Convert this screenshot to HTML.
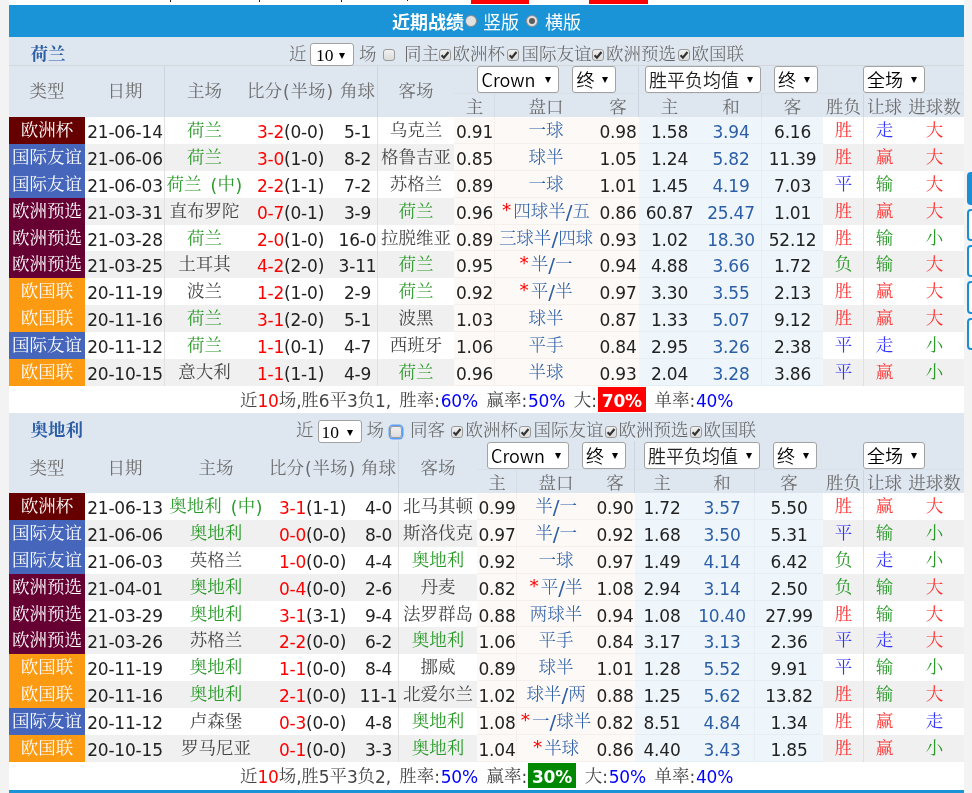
<!DOCTYPE html>
<html lang="zh-CN"><head><meta charset="utf-8"><title>近期战绩</title>
<style>
html,body{margin:0;padding:0}
body{background:#f3f3f3;width:972px;height:793px;overflow:hidden;position:relative;font-family:"DejaVu Sans","Noto Serif CJK SC",sans-serif;font-size:17.5px;font-weight:300;color:#333}
#wrap{will-change:transform;position:absolute;left:9px;top:0;width:955px;height:793px;background:#fff}
#topfrag{position:absolute;left:0;top:0;width:955px;height:5px;background:#fff}
#topfrag i{position:absolute;top:0;width:1px;height:2px;background:#222}
#topfrag b{position:absolute;top:0;height:3.5px;background:#f00}
#bar{position:absolute;left:0;top:5px;width:955px;height:32px;background:#1a94d6;color:#fff;line-height:32px;white-space:nowrap}
#bar .ttl{position:absolute;left:383px;top:0;font-family:"Noto Sans CJK SC",sans-serif;font-weight:bold;font-size:18px}
#bar .rl{font-family:"Noto Sans CJK SC",sans-serif;font-size:18px;font-weight:400;position:absolute;top:0}
#bar .rl1{left:474px}
#bar .rl2{left:536px}
#bar .rd{position:absolute;top:10px;width:12px;height:12px;border-radius:50%;background:#e2e2e2;border:1px solid #8a8a8a;box-sizing:border-box}
#bar .rd1{left:456px}
#bar .rd2{left:517px}
#bar .rd.on:after{content:"";position:absolute;left:2px;top:2px;width:6px;height:6px;border-radius:50%;background:#5c5c5c}
#main{position:absolute;left:0;top:37px;width:955px}
.trow{position:relative;height:28px;background:#dee6f0;line-height:28px;white-space:nowrap;color:#666}
.tname{position:absolute;left:21.5px;top:3px;color:#2b5ea6;font-weight:700}
.sel{font-weight:400}
.trow .ab{position:absolute;top:3px}
.sel{display:inline-block;box-sizing:border-box;height:23px;border:1px solid #a2a2a2;border-radius:3px;background:#fff;position:relative;vertical-align:middle;text-align:left;color:#000;font-family:"DejaVu Sans","Noto Sans CJK SC",sans-serif;font-size:17px;line-height:21px}
.sel .st{position:absolute;left:3.5px;top:0}
.sel .ar{position:absolute;right:7px;top:8px;width:0;height:0;border-left:3px solid transparent;border-right:3px solid transparent;border-top:6px solid #000}
.cb{position:absolute;top:12px;width:12px;height:12px;box-sizing:border-box;border:1px solid #9a9a9a;border-radius:3px;background:linear-gradient(#f0f0f0,#dcdcdc)}
.cb.foc{box-shadow:0 0 0 1.5px #5b9dfb}
.cb svg{position:absolute;left:-1px;top:-1px;width:12px;height:12px}
table.tb{border-collapse:collapse;table-layout:fixed;width:955px}
.tb th,.tb td{padding:0;text-align:center;white-space:nowrap;overflow:visible;font-weight:normal}
.tb tr.h1{height:29px;background:#dee6f0;color:#6c6c6c}
.tb tr.h2{height:23px;background:#dee6f0;color:#6c6c6c}
.tb tr.h2 th{line-height:20px;height:20px;padding-top:3px}
.tb tr.h1 th{line-height:24px}
.tb th.selc{vertical-align:top;line-height:0;font-size:0}
.selc .sel{height:27px;margin:1px 6.5px 0 6.5px;line-height:25px;vertical-align:top;font-size:18px;font-family:"Noto Sans CJK SC",sans-serif;font-weight:350}
.selc .sel .ar{top:10px;right:7px}
.trow .sel{font-size:17.5px;line-height:23px;font-family:"Liberation Serif",serif}
.trow .sel .st{left:5px}
.trow .sel .ar{top:9px;right:8px}
.trow .sel{position:absolute;top:6px}
.tb tr.h1 th,.tb tr.h2 th{background:#dee6f0}
.tb td{height:27px;line-height:27px}
.tb tr.alt td{background:#f0f0f0}
.tb td.od,.tb tr.alt td.od{background:#fdf9f6}
.tb td.eu,.tb tr.alt td.eu{background:#eef6fb}
.ty{color:#fff}
.tb td.t1,.tb tr.alt td.t1{background:#660000}
.tb td.t2,.tb tr.alt td.t2{background:#4566bb}
.tb td.t3,.tb tr.alt td.t3{background:#660033}
.tb td.t4,.tb tr.alt td.t4{background:#fc9a12}
.l{font-size:17px;font-weight:400;position:relative;top:2px;letter-spacing:-0.2px}
.dt,.sc,.cn,.od,.eu{color:#222}
.tb td.hc{font-weight:300}
.tm{color:#444}
.tm.g{color:#2a9a2a}
.red{color:#f00}
.tb td.hc{color:#2b5ea6;font-size:17.5px}
.star{color:#f00}
.dr{color:#2b5ea6}
.rs.r{color:#f33}
.rs.b{color:#33f}
.rs.g{color:#2a9a2a}
.stat td{background:#fff;height:27px;color:#444;word-spacing:3px}
.stat td .w{position:relative;top:1px}
.stat .l{top:1px}
.cl{margin-right:1px}
.blu{color:#00f}
.hot{background:#f00;color:#fff;font-weight:bold;padding:4px 4px 1px}
.cold{background:#080;color:#fff;font-weight:bold;padding:4px 4px 1px}
#bot{position:absolute;left:0;top:790px;width:955px;height:3px;background:#1a94d6}
#side{position:absolute;left:967px;top:0;width:5px;height:793px;overflow:hidden}
#side i{position:absolute;left:0;box-sizing:border-box;width:10px;height:33px;border:2px solid #1a8fd6;border-radius:4px;background:#fff}
#side i.f{background:#1a8fd6}

.tb th.vr{box-shadow:inset -1px 0 0 #cdd6e0}
.tb th.vf{box-shadow:inset -1px 0 0 #d3dce7}
.tb td.vr{box-shadow:inset -1px 0 0 #e1e1e1}
.tb td.od{box-shadow:inset 0 -1px 0 #f6f0ec}
.tb td.od.vf{box-shadow:inset -1px -1px 0 #f6f0ec}
.tb td.eu{box-shadow:inset 0 -1px 0 #e6eef4}
.tb td.eu.vf{box-shadow:inset -1px -1px 0 #e6eef4}
.tb th.selc{box-shadow:inset 0 -1px 0 #d3dce7}
.tb tr.sh td{height:26px;line-height:26px}
#s1 tr.h1 th{box-shadow:inset 0 1px 0 #d3d8dd}
#s1 tr.h1 th.vr{box-shadow:inset -1px 0 0 #cdd6e0, inset 0 1px 0 #d3d8dd}
#s1 tr.h1 th.selc{box-shadow:inset 0 1px 0 #d3d8dd, inset 0 -1px 0 #d8e0ea}
#s2 tr.h1 th.selc{box-shadow:inset 0 -1px 0 #d8e0ea}
#s1 tr.h1 th.selc.vr{box-shadow:inset 0 1px 0 #d3d8dd, inset 0 -1px 0 #d8e0ea, inset -1px 0 0 #cdd6e0}
#s2 tr.h1 th.selc.vr{box-shadow:inset 0 -1px 0 #d8e0ea, inset -1px 0 0 #cdd6e0}
.tb td.tm{word-spacing:3px}
.tb td.tm .l{margin:0 .5px}
.tb th .l{margin:0 1px;top:1px}
#s2 tr.h1 th{padding-top:2px}
#s2 tr.h1 th.selc{padding-top:0}
#s2 .selc .sc{margin-left:8.5px}
.tb td.hc .l{font-size:20px;top:1.5px;letter-spacing:0;line-height:1px}
.tb td.hc .star{font-size:18.5px;top:-1px;margin-right:.5px}
#s2t .sel{top:7px}
#s2t .sel .st{left:2.5px}
#s2t .cb{top:13px}
.tb td.hc .star{margin-right:2px}
#s1 .selc .sc{margin-left:5.5px}

</style></head><body>
<div id="wrap">
<div id="topfrag"><i style="left:161px"></i><i style="left:250px"></i><i style="left:332px"></i><i style="left:398px;height:1px"></i><b style="left:462px;width:58px"></b><b style="left:580px;width:59px"></b></div>
<div id="bar"><span class="ttl">近期战绩</span><span class="rd rd1"></span><span class="rl rl1">竖版</span><span class="rd rd2 on"></span><span class="rl rl2">横版</span></div>
<div id="main">
<div class="trow" id="s1t"><span class="tname">荷兰</span><span class="ab " style="left:280px">近</span><span class="sel s10" style="left:301px;width:44px"><span class="st">10</span><i class="ar"></i></span><span class="ab " style="left:350px">场</span><span class="cb cb0 " style="left:374px"></span><span class="ab " style="left:395px">同主</span><span class="cb ck" style="left:430px"><svg viewBox="0 0 12 12"><path d="M2.6 6.3 L4.9 8.7 L9.5 3" fill="none" stroke="#333" stroke-width="2.2"/></svg></span><span class="ab " style="left:443.5px">欧洲杯</span><span class="cb ck" style="left:498px"><svg viewBox="0 0 12 12"><path d="M2.6 6.3 L4.9 8.7 L9.5 3" fill="none" stroke="#333" stroke-width="2.2"/></svg></span><span class="ab " style="left:512.5px">国际友谊</span><span class="cb ck" style="left:583px"><svg viewBox="0 0 12 12"><path d="M2.6 6.3 L4.9 8.7 L9.5 3" fill="none" stroke="#333" stroke-width="2.2"/></svg></span><span class="ab " style="left:597px">欧洲预选</span><span class="cb ck" style="left:669px"><svg viewBox="0 0 12 12"><path d="M2.6 6.3 L4.9 8.7 L9.5 3" fill="none" stroke="#333" stroke-width="2.2"/></svg></span><span class="ab " style="left:682.5px">欧国联</span></div>
<table class="tb" id="s1"><colgroup><col style="width:76px"><col style="width:80px"><col style="width:79px"><col style="width:93px"><col style="width:41px"><col style="width:76px"><col style="width:41px"><col style="width:102px"><col style="width:42px"><col style="width:61px"><col style="width:62px"><col style="width:61px"><col style="width:41px"><col style="width:41px"><col style="width:59px"></colgroup>
<tr class="h1"><th rowspan="2">类型</th><th rowspan="2" class="vr">日期</th><th rowspan="2">主场</th><th rowspan="2">比分<span class="l">(</span>半场<span class="l">)</span></th><th rowspan="2" class="vr">角球</th><th rowspan="2">客场</th><th colspan="3" class="vr selc"><span class="sel sa" style="width:82px"><span class="st">Crown</span><i class="ar"></i></span><span class="sel sb" style="width:44px"><span class="st">终</span><i class="ar"></i></span></th><th colspan="3" class="selc"><span class="sel sc" style="width:116px"><span class="st">胜平负均值</span><i class="ar"></i></span><span class="sel sd" style="width:44px"><span class="st">终</span><i class="ar"></i></span></th><th colspan="3" class="selc"><span class="sel se" style="width:62px"><span class="st">全场</span><i class="ar"></i></span></th></tr>
<tr class="h2"><th class="vf">主</th><th>盘口</th><th class="vr">客</th><th>主</th><th class="vf">和</th><th>客</th><th class="vr">胜负</th><th>让球</th><th>进球数</th></tr>
<tr class=""><td class="ty t1">欧洲杯</td><td class="dt vr"><span class="l">21-06-14</span></td><td class="tm g">荷兰</td><td class="sc"><span class="l"><span class="red">3-2</span>(0-0)</span></td><td class="cn vr"><span class="l">5-1</span></td><td class="tm ">乌克兰</td><td class="od vf"><span class="l">0.91</span></td><td class="od hc">一球</td><td class="od"><span class="l">0.98</span></td><td class="eu"><span class="l">1.58</span></td><td class="eu dr vf"><span class="l">3.94</span></td><td class="eu"><span class="l">6.16</span></td><td class="rs vr r">胜</td><td class="rs b">走</td><td class="rs r">大</td></tr>
<tr class="alt"><td class="ty t2">国际友谊</td><td class="dt vr"><span class="l">21-06-06</span></td><td class="tm g">荷兰</td><td class="sc"><span class="l"><span class="red">3-0</span>(1-0)</span></td><td class="cn vr"><span class="l">8-2</span></td><td class="tm ">格鲁吉亚</td><td class="od vf"><span class="l">0.85</span></td><td class="od hc">球半</td><td class="od"><span class="l">1.05</span></td><td class="eu"><span class="l">1.24</span></td><td class="eu dr vf"><span class="l">5.82</span></td><td class="eu"><span class="l">11.39</span></td><td class="rs vr r">胜</td><td class="rs r">赢</td><td class="rs r">大</td></tr>
<tr class=""><td class="ty t2">国际友谊</td><td class="dt vr"><span class="l">21-06-03</span></td><td class="tm g">荷兰 <span class="l">(</span>中<span class="l">)</span></td><td class="sc"><span class="l"><span class="red">2-2</span>(1-1)</span></td><td class="cn vr"><span class="l">7-2</span></td><td class="tm ">苏格兰</td><td class="od vf"><span class="l">0.89</span></td><td class="od hc">一球</td><td class="od"><span class="l">1.01</span></td><td class="eu"><span class="l">1.45</span></td><td class="eu dr vf"><span class="l">4.19</span></td><td class="eu"><span class="l">7.03</span></td><td class="rs vr b">平</td><td class="rs g">输</td><td class="rs r">大</td></tr>
<tr class="alt"><td class="ty t3">欧洲预选</td><td class="dt vr"><span class="l">21-03-31</span></td><td class="tm ">直布罗陀</td><td class="sc"><span class="l"><span class="red">0-7</span>(0-1)</span></td><td class="cn vr"><span class="l">3-9</span></td><td class="tm g">荷兰</td><td class="od vf"><span class="l">0.96</span></td><td class="od hc"><span class="l star">*</span>四球半<span class="l">/</span>五</td><td class="od"><span class="l">0.86</span></td><td class="eu"><span class="l">60.87</span></td><td class="eu dr vf"><span class="l">25.47</span></td><td class="eu"><span class="l">1.01</span></td><td class="rs vr r">胜</td><td class="rs r">赢</td><td class="rs r">大</td></tr>
<tr class=" sh"><td class="ty t3">欧洲预选</td><td class="dt vr"><span class="l">21-03-28</span></td><td class="tm g">荷兰</td><td class="sc"><span class="l"><span class="red">2-0</span>(1-0)</span></td><td class="cn vr"><span class="l">16-0</span></td><td class="tm ">拉脱维亚</td><td class="od vf"><span class="l">0.89</span></td><td class="od hc">三球半<span class="l">/</span>四球</td><td class="od"><span class="l">0.93</span></td><td class="eu"><span class="l">1.02</span></td><td class="eu dr vf"><span class="l">18.30</span></td><td class="eu"><span class="l">52.12</span></td><td class="rs vr r">胜</td><td class="rs g">输</td><td class="rs g">小</td></tr>
<tr class="alt"><td class="ty t3">欧洲预选</td><td class="dt vr"><span class="l">21-03-25</span></td><td class="tm ">土耳其</td><td class="sc"><span class="l"><span class="red">4-2</span>(2-0)</span></td><td class="cn vr"><span class="l">3-11</span></td><td class="tm g">荷兰</td><td class="od vf"><span class="l">0.95</span></td><td class="od hc"><span class="l star">*</span>半<span class="l">/</span>一</td><td class="od"><span class="l">0.94</span></td><td class="eu"><span class="l">4.88</span></td><td class="eu dr vf"><span class="l">3.66</span></td><td class="eu"><span class="l">1.72</span></td><td class="rs vr g">负</td><td class="rs g">输</td><td class="rs r">大</td></tr>
<tr class=""><td class="ty t4">欧国联</td><td class="dt vr"><span class="l">20-11-19</span></td><td class="tm ">波兰</td><td class="sc"><span class="l"><span class="red">1-2</span>(1-0)</span></td><td class="cn vr"><span class="l">2-9</span></td><td class="tm g">荷兰</td><td class="od vf"><span class="l">0.92</span></td><td class="od hc"><span class="l star">*</span>平<span class="l">/</span>半</td><td class="od"><span class="l">0.97</span></td><td class="eu"><span class="l">3.30</span></td><td class="eu dr vf"><span class="l">3.55</span></td><td class="eu"><span class="l">2.13</span></td><td class="rs vr r">胜</td><td class="rs r">赢</td><td class="rs r">大</td></tr>
<tr class="alt"><td class="ty t4">欧国联</td><td class="dt vr"><span class="l">20-11-16</span></td><td class="tm g">荷兰</td><td class="sc"><span class="l"><span class="red">3-1</span>(2-0)</span></td><td class="cn vr"><span class="l">5-1</span></td><td class="tm ">波黑</td><td class="od vf"><span class="l">1.03</span></td><td class="od hc">球半</td><td class="od"><span class="l">0.87</span></td><td class="eu"><span class="l">1.33</span></td><td class="eu dr vf"><span class="l">5.07</span></td><td class="eu"><span class="l">9.12</span></td><td class="rs vr r">胜</td><td class="rs r">赢</td><td class="rs r">大</td></tr>
<tr class=""><td class="ty t2">国际友谊</td><td class="dt vr"><span class="l">20-11-12</span></td><td class="tm g">荷兰</td><td class="sc"><span class="l"><span class="red">1-1</span>(0-1)</span></td><td class="cn vr"><span class="l">4-7</span></td><td class="tm ">西班牙</td><td class="od vf"><span class="l">1.06</span></td><td class="od hc">平手</td><td class="od"><span class="l">0.84</span></td><td class="eu"><span class="l">2.95</span></td><td class="eu dr vf"><span class="l">3.26</span></td><td class="eu"><span class="l">2.38</span></td><td class="rs vr b">平</td><td class="rs b">走</td><td class="rs g">小</td></tr>
<tr class="alt"><td class="ty t4">欧国联</td><td class="dt vr"><span class="l">20-10-15</span></td><td class="tm ">意大利</td><td class="sc"><span class="l"><span class="red">1-1</span>(1-1)</span></td><td class="cn vr"><span class="l">4-9</span></td><td class="tm g">荷兰</td><td class="od vf"><span class="l">0.96</span></td><td class="od hc">半球</td><td class="od"><span class="l">0.93</span></td><td class="eu"><span class="l">2.04</span></td><td class="eu dr vf"><span class="l">3.28</span></td><td class="eu"><span class="l">3.86</span></td><td class="rs vr b">平</td><td class="rs r">赢</td><td class="rs g">小</td></tr>
<tr class="stat"><td colspan="15"><span class="w">近<span class="l red">10</span>场<span class="l">,</span>胜<span class="l">6</span>平<span class="l">3</span>负<span class="l">1, </span>胜率<span class="l cl">:</span><span class="l blu">60%</span> 赢率<span class="l cl">:</span><span class="l blu">50%</span> 大<span class="l cl">:</span><span class="l hot">70%</span> 单率<span class="l cl">:</span><span class="l blu">40%</span></span></td></tr>
</table>
<div class="trow" id="s2t"><span class="tname">奥地利</span><span class="ab " style="left:287px">近</span><span class="sel s10" style="left:309px;width:44px"><span class="st">10</span><i class="ar"></i></span><span class="ab " style="left:357.5px">场</span><span class="cb cb0 foc" style="left:381px"></span><span class="ab " style="left:401px">同客</span><span class="cb ck" style="left:442px"><svg viewBox="0 0 12 12"><path d="M2.6 6.3 L4.9 8.7 L9.5 3" fill="none" stroke="#333" stroke-width="2.2"/></svg></span><span class="ab " style="left:456.5px">欧洲杯</span><span class="cb ck" style="left:510px"><svg viewBox="0 0 12 12"><path d="M2.6 6.3 L4.9 8.7 L9.5 3" fill="none" stroke="#333" stroke-width="2.2"/></svg></span><span class="ab " style="left:524.5px">国际友谊</span><span class="cb ck" style="left:595.5px"><svg viewBox="0 0 12 12"><path d="M2.6 6.3 L4.9 8.7 L9.5 3" fill="none" stroke="#333" stroke-width="2.2"/></svg></span><span class="ab " style="left:609.5px">欧洲预选</span><span class="cb ck" style="left:681px"><svg viewBox="0 0 12 12"><path d="M2.6 6.3 L4.9 8.7 L9.5 3" fill="none" stroke="#333" stroke-width="2.2"/></svg></span><span class="ab " style="left:694.5px">欧国联</span></div>
<table class="tb" id="s2"><colgroup><col style="width:76px"><col style="width:80px"><col style="width:102px"><col style="width:91px"><col style="width:41px"><col style="width:78px"><col style="width:40px"><col style="width:78px"><col style="width:40px"><col style="width:54px"><col style="width:66px"><col style="width:68px"><col style="width:41px"><col style="width:41px"><col style="width:59px"></colgroup>
<tr class="h1"><th rowspan="2">类型</th><th rowspan="2" class="">日期</th><th rowspan="2">主场</th><th rowspan="2">比分<span class="l">(</span>半场<span class="l">)</span></th><th rowspan="2" class="vr">角球</th><th rowspan="2">客场</th><th colspan="3" class="vr selc"><span class="sel sa" style="width:82px"><span class="st">Crown</span><i class="ar"></i></span><span class="sel sb" style="width:44px"><span class="st">终</span><i class="ar"></i></span></th><th colspan="3" class="selc"><span class="sel sc" style="width:116px"><span class="st">胜平负均值</span><i class="ar"></i></span><span class="sel sd" style="width:44px"><span class="st">终</span><i class="ar"></i></span></th><th colspan="3" class="selc"><span class="sel se" style="width:62px"><span class="st">全场</span><i class="ar"></i></span></th></tr>
<tr class="h2"><th class="vf">主</th><th>盘口</th><th class="vr">客</th><th>主</th><th class="vf">和</th><th>客</th><th class="vr">胜负</th><th>让球</th><th>进球数</th></tr>
<tr class=""><td class="ty t1">欧洲杯</td><td class="dt "><span class="l">21-06-13</span></td><td class="tm g">奥地利 <span class="l">(</span>中<span class="l">)</span></td><td class="sc"><span class="l"><span class="red">3-1</span>(1-1)</span></td><td class="cn vr"><span class="l">4-0</span></td><td class="tm ">北马其顿</td><td class="od vf"><span class="l">0.99</span></td><td class="od hc">半<span class="l">/</span>一</td><td class="od"><span class="l">0.90</span></td><td class="eu"><span class="l">1.72</span></td><td class="eu dr vf"><span class="l">3.57</span></td><td class="eu"><span class="l">5.50</span></td><td class="rs vr r">胜</td><td class="rs r">赢</td><td class="rs r">大</td></tr>
<tr class="alt"><td class="ty t2">国际友谊</td><td class="dt "><span class="l">21-06-06</span></td><td class="tm g">奥地利</td><td class="sc"><span class="l"><span class="red">0-0</span>(0-0)</span></td><td class="cn vr"><span class="l">8-0</span></td><td class="tm ">斯洛伐克</td><td class="od vf"><span class="l">0.97</span></td><td class="od hc">半<span class="l">/</span>一</td><td class="od"><span class="l">0.92</span></td><td class="eu"><span class="l">1.68</span></td><td class="eu dr vf"><span class="l">3.50</span></td><td class="eu"><span class="l">5.31</span></td><td class="rs vr b">平</td><td class="rs g">输</td><td class="rs g">小</td></tr>
<tr class=""><td class="ty t2">国际友谊</td><td class="dt "><span class="l">21-06-03</span></td><td class="tm ">英格兰</td><td class="sc"><span class="l"><span class="red">1-0</span>(0-0)</span></td><td class="cn vr"><span class="l">4-4</span></td><td class="tm g">奥地利</td><td class="od vf"><span class="l">0.92</span></td><td class="od hc">一球</td><td class="od"><span class="l">0.97</span></td><td class="eu"><span class="l">1.49</span></td><td class="eu dr vf"><span class="l">4.14</span></td><td class="eu"><span class="l">6.42</span></td><td class="rs vr g">负</td><td class="rs b">走</td><td class="rs g">小</td></tr>
<tr class="alt"><td class="ty t3">欧洲预选</td><td class="dt "><span class="l">21-04-01</span></td><td class="tm g">奥地利</td><td class="sc"><span class="l"><span class="red">0-4</span>(0-0)</span></td><td class="cn vr"><span class="l">2-6</span></td><td class="tm ">丹麦</td><td class="od vf"><span class="l">0.82</span></td><td class="od hc"><span class="l star">*</span>平<span class="l">/</span>半</td><td class="od"><span class="l">1.08</span></td><td class="eu"><span class="l">2.94</span></td><td class="eu dr vf"><span class="l">3.14</span></td><td class="eu"><span class="l">2.50</span></td><td class="rs vr g">负</td><td class="rs g">输</td><td class="rs r">大</td></tr>
<tr class=" sh"><td class="ty t3">欧洲预选</td><td class="dt "><span class="l">21-03-29</span></td><td class="tm g">奥地利</td><td class="sc"><span class="l"><span class="red">3-1</span>(3-1)</span></td><td class="cn vr"><span class="l">9-4</span></td><td class="tm ">法罗群岛</td><td class="od vf"><span class="l">0.88</span></td><td class="od hc">两球半</td><td class="od"><span class="l">0.94</span></td><td class="eu"><span class="l">1.08</span></td><td class="eu dr vf"><span class="l">10.40</span></td><td class="eu"><span class="l">27.99</span></td><td class="rs vr r">胜</td><td class="rs g">输</td><td class="rs r">大</td></tr>
<tr class="alt"><td class="ty t3">欧洲预选</td><td class="dt "><span class="l">21-03-26</span></td><td class="tm ">苏格兰</td><td class="sc"><span class="l"><span class="red">2-2</span>(0-0)</span></td><td class="cn vr"><span class="l">6-2</span></td><td class="tm g">奥地利</td><td class="od vf"><span class="l">1.06</span></td><td class="od hc">平手</td><td class="od"><span class="l">0.84</span></td><td class="eu"><span class="l">3.17</span></td><td class="eu dr vf"><span class="l">3.13</span></td><td class="eu"><span class="l">2.36</span></td><td class="rs vr b">平</td><td class="rs b">走</td><td class="rs r">大</td></tr>
<tr class=""><td class="ty t4">欧国联</td><td class="dt "><span class="l">20-11-19</span></td><td class="tm g">奥地利</td><td class="sc"><span class="l"><span class="red">1-1</span>(0-0)</span></td><td class="cn vr"><span class="l">8-4</span></td><td class="tm ">挪威</td><td class="od vf"><span class="l">0.89</span></td><td class="od hc">球半</td><td class="od"><span class="l">1.01</span></td><td class="eu"><span class="l">1.28</span></td><td class="eu dr vf"><span class="l">5.52</span></td><td class="eu"><span class="l">9.91</span></td><td class="rs vr b">平</td><td class="rs g">输</td><td class="rs g">小</td></tr>
<tr class="alt"><td class="ty t4">欧国联</td><td class="dt "><span class="l">20-11-16</span></td><td class="tm g">奥地利</td><td class="sc"><span class="l"><span class="red">2-1</span>(0-0)</span></td><td class="cn vr"><span class="l">11-1</span></td><td class="tm ">北爱尔兰</td><td class="od vf"><span class="l">1.02</span></td><td class="od hc">球半<span class="l">/</span>两</td><td class="od"><span class="l">0.88</span></td><td class="eu"><span class="l">1.25</span></td><td class="eu dr vf"><span class="l">5.62</span></td><td class="eu"><span class="l">13.82</span></td><td class="rs vr r">胜</td><td class="rs g">输</td><td class="rs r">大</td></tr>
<tr class=""><td class="ty t2">国际友谊</td><td class="dt "><span class="l">20-11-12</span></td><td class="tm ">卢森堡</td><td class="sc"><span class="l"><span class="red">0-3</span>(0-0)</span></td><td class="cn vr"><span class="l">4-8</span></td><td class="tm g">奥地利</td><td class="od vf"><span class="l">1.08</span></td><td class="od hc"><span class="l star">*</span>一<span class="l">/</span>球半</td><td class="od"><span class="l">0.82</span></td><td class="eu"><span class="l">8.51</span></td><td class="eu dr vf"><span class="l">4.84</span></td><td class="eu"><span class="l">1.34</span></td><td class="rs vr r">胜</td><td class="rs r">赢</td><td class="rs b">走</td></tr>
<tr class="alt"><td class="ty t4">欧国联</td><td class="dt "><span class="l">20-10-15</span></td><td class="tm ">罗马尼亚</td><td class="sc"><span class="l"><span class="red">0-1</span>(0-0)</span></td><td class="cn vr"><span class="l">3-3</span></td><td class="tm g">奥地利</td><td class="od vf"><span class="l">1.04</span></td><td class="od hc"><span class="l star">*</span>半球</td><td class="od"><span class="l">0.86</span></td><td class="eu"><span class="l">4.40</span></td><td class="eu dr vf"><span class="l">3.43</span></td><td class="eu"><span class="l">1.85</span></td><td class="rs vr r">胜</td><td class="rs r">赢</td><td class="rs g">小</td></tr>
<tr class="stat"><td colspan="15"><span class="w">近<span class="l red">10</span>场<span class="l">,</span>胜<span class="l">5</span>平<span class="l">3</span>负<span class="l">2, </span>胜率<span class="l cl">:</span><span class="l blu">50%</span> 赢率<span class="l cl">:</span><span class="l cold">30%</span> 大<span class="l cl">:</span><span class="l blu">50%</span> 单率<span class="l cl">:</span><span class="l blu">40%</span></span></td></tr>
</table>
</div>
<div id="bot"></div>
</div>
<div id="side"><i class="f" style="top:172px"></i><i style="top:209px;height:32px"></i><i style="top:245px;height:32px"></i><i style="top:281px"></i><i style="top:318px;height:32px"></i></div>
</body></html>
